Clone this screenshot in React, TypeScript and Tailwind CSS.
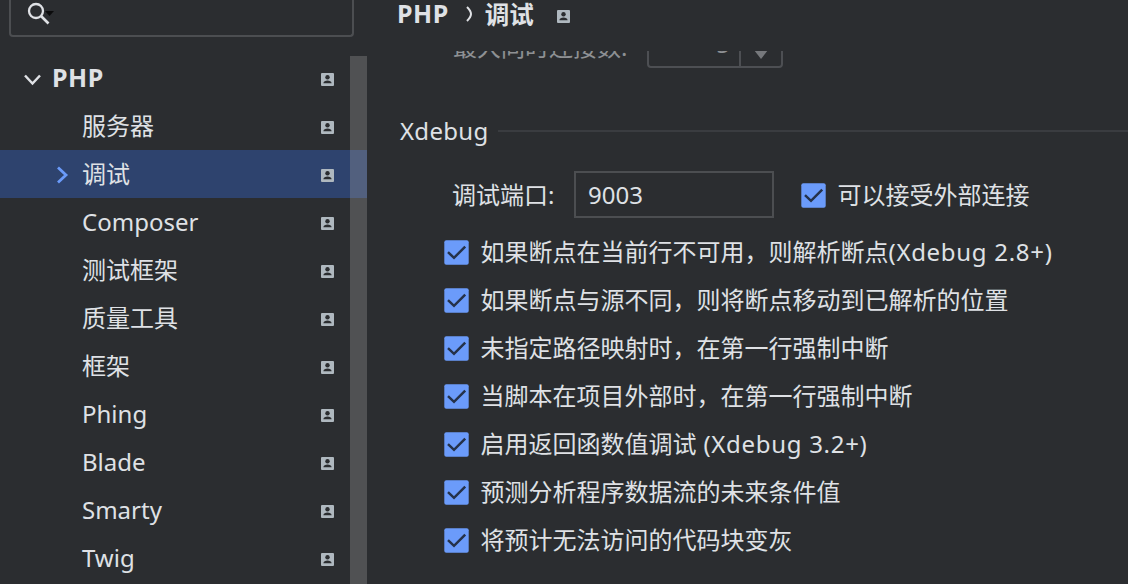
import React from "react";

type TreeItem = { label: string; selected?: boolean };

const treeItems: TreeItem[] = [
  { label: "服务器" },
  { label: "调试", selected: true },
  { label: "Composer" },
  { label: "测试框架" },
  { label: "质量工具" },
  { label: "框架" },
  { label: "Phing" },
  { label: "Blade" },
  { label: "Smarty" },
  { label: "Twig" },
];

type Option = { label: string; version?: string };

const options: Option[] = [
  { label: "如果断点在当前行不可用，则解析断点", version: "(Xdebug 2.8+)" },
  { label: "如果断点与源不同，则将断点移动到已解析的位置" },
  { label: "未指定路径映射时，在第一行强制中断" },
  { label: "当脚本在项目外部时，在第一行强制中断" },
  { label: "启用返回函数值调试", version: " (Xdebug 3.2+)" },
  { label: "预测分析程序数据流的未来条件值" },
  { label: "将预计无法访问的代码块变灰" },
];

function ProjectIcon() {
  return (
    <svg width="13" height="13" viewBox="0 0 13 13" className="block shrink-0">
      <rect width="13" height="13" rx="1" fill="#afb8bf" />
      <circle cx="6.5" cy="4.3" r="2.2" fill="#2b2d30" />
      <path d="M2.4 10.2C2.4 8.4 4.4 7.5 6.5 7.5s4.1.9 4.1 2.7z" fill="#2b2d30" />
    </svg>
  );
}

function Checkbox() {
  return (
    <svg width="25" height="25" viewBox="0 0 25 25" className="block shrink-0">
      <rect x="0.3" y="0.3" width="24.4" height="24.4" rx="2" fill="#6b9bfa" />
      <path d="M4 12.2l6 5.6L21.2 6.6" fill="none" stroke="#25324a" strokeWidth="2.5" />
    </svg>
  );
}

function CheckRow({ label, version }: Option) {
  return (
    <div className="flex h-12 items-center gap-[11.500px]">
      <Checkbox />
      <span className="-mt-px whitespace-pre">
        {label}
        {version && <span className="tracking-[0.7px]">{version}</span>}
      </span>
    </div>
  );
}

function Sidebar() {
  return (
    <aside className="flex h-full w-[367px] shrink-0 flex-col">
      <div className="ml-[9px] flex h-[37px] w-[345px] shrink-0 rounded-b-[4px] border-2 border-t-0 border-[#4c4e51] pl-[15px]">
        <svg width="30" height="28" viewBox="0 0 30 28">
          <path d="M19 11h9l-4.500 5z" fill="#0b0b0c" />
          <circle cx="10" cy="11" r="7" fill="none" stroke="#dfe1e5" strokeWidth="2.3" />
          <path d="M15 16l7.500 7.500" stroke="#dfe1e5" strokeWidth="2.600" />
        </svg>
      </div>
      <div className="relative mt-[17px] flex flex-col pb-[2px]">
        <div className="flex h-12 items-center pr-[33px] pl-6">
          <svg width="17" height="12" viewBox="0 0 17 12" className="mt-1">
            <path d="M1 1.500l7.500 8L16 1.500" fill="none" stroke="#dfe1e5" strokeWidth="2.500" />
          </svg>
          <span className="-mt-[2px] ml-[11px] flex-1 text-[25px] font-bold tracking-[0.5px]">PHP</span>
          <div className="pt-[2px]">
            <ProjectIcon />
          </div>
        </div>
        {treeItems.map((item) => (
          <div
            key={item.label}
            className={
              item.selected
                ? "flex h-12 items-center bg-[#2e436e] pr-[33px] pl-[56px]"
                : "flex h-12 items-center pr-[33px] pl-[56px]"
            }
          >
            <div className="w-[26px]">
              {item.selected && (
                <svg width="13" height="18" viewBox="0 0 13 18" className="mt-[2px]">
                  <path d="M2 1.500L10 9l-8 7.500" fill="none" stroke="#6b9bfa" strokeWidth="2.800" />
                </svg>
              )}
            </div>
            <span className="flex-1">{item.label}</span>
            <div className="pt-[2px]">
              <ProjectIcon />
            </div>
          </div>
        ))}
        <div className="absolute top-[2px] right-0 bottom-0 w-[17px] bg-[#a6a6a6]/30" />
      </div>
    </aside>
  );
}

function Main() {
  return (
    <main className="flex h-full flex-1 flex-col pl-[31px]">
      <header className="flex h-[51px] shrink-0 items-start leading-[28px] font-bold">
        <span className="-mt-px -ml-px text-[25px] tracking-[0.5px]">PHP</span>
        <svg width="8" height="16" viewBox="0 0 8 16" className="mt-[6px] ml-[16px]">
          <path d="M2 1q4 4 4 7t-4 7" fill="none" stroke="#dfe1e5" strokeWidth="2" />
        </svg>
        <span className="mt-px ml-[12px] text-[24.500px]">调试</span>
        <div className="mt-[10px] ml-[23px]">
          <ProjectIcon />
        </div>
      </header>
      <section className="flex h-[17px] shrink-0 flex-col justify-end overflow-hidden pl-[55px] opacity-55">
        <div className="flex h-12 shrink-0 items-end">
          <span className="mb-[3px] w-[194px]">最大同时连接数:</span>
          <div className="flex h-12 w-[136px] rounded-[4px] border-2 border-[#6a6c70]">
            <div className="flex flex-1 items-center justify-end border-r-2 border-[#6a6c70] pr-[9px]">
              5
            </div>
            <div className="flex w-[40px] items-end justify-center pb-[6px]">
              <svg width="14" height="10" viewBox="0 0 14 10">
                <path d="M0 0h14L7 9z" fill="#b4b6ba" />
              </svg>
            </div>
          </div>
        </div>
      </section>
      <div className="mt-[39px] ml-[2px] flex h-12 shrink-0 items-center gap-[9px]">
        <span className="tracking-[0.3px]">Xdebug</span>
        <div className="h-[2px] flex-1 bg-[#3a3c40]" />
      </div>
      <div className="mt-[16px] flex h-[48px] shrink-0 items-center pl-[54px]">
        <span className="w-[122px]">调试端口:</span>
        <div className="-mt-px flex h-[47px] w-[200px] items-center border-2 border-[#4c4e51] pl-[12px]">9003</div>
        <div className="ml-[27px] flex items-center gap-[11.500px]">
          <Checkbox />
          <span>可以接受外部连接</span>
        </div>
      </div>
      <div className="mt-[9px] flex flex-col pl-[46px]">
        {options.map((option) => (
          <CheckRow key={option.label} {...option} />
        ))}
      </div>
    </main>
  );
}

export default function App() {
  return (
    <div className="flex h-[584px] w-[1128px] overflow-hidden bg-[#2b2d30] font-['Noto_Sans','Noto_Sans_CJK_SC',sans-serif] text-[24px] leading-9 whitespace-nowrap text-[#dfe1e5]">
      <Sidebar />
      <Main />
    </div>
  );
}
